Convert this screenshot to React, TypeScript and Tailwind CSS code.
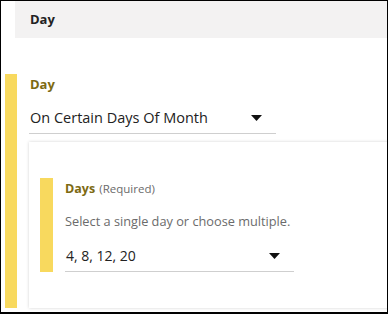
import React from "react";

const Caret: React.FC = () => (
  <svg width="11" height="6" viewBox="0 0 11 6" className="shrink-0">
    <path d="M0 0 H11 L5.5 6 Z" fill="#111" />
  </svg>
);

const SelectField: React.FC<{ value: string; width: string; size: string }> = ({ value, width, size }) => (
  <div className={`${width} flex items-center justify-between border-b border-[#cfcfcf] pb-[5px] pl-px pr-[14px]`}>
    <span className={`${size} leading-[20px] text-[#222]`}>{value}</span>
    <Caret />
  </div>
);

const App: React.FC = () => {
  return (
    <div
      className="w-[388px] h-[314px] overflow-hidden bg-white border border-black border-b-2"
      style={{ fontFamily: '"Open Sans", "Noto Sans", sans-serif' }}
    >
      {/* Section header */}
      <div className="ml-[14px] h-[37px] bg-[#f3f2f2] pl-[15px] flex items-center">
        <span className="text-[13px] font-bold text-[#222]">Day</span>
      </div>

      <div className="mt-[36px] flex">
        <div className="ml-[4px] w-[12px] bg-[#f8d95e] shrink-0" />
        <div className="pl-[12px] flex-1">
          <div className="pl-px text-[13px] leading-[20px] font-bold text-[#7d6a12]">Day</div>
          <div className="mt-[14px]">
            <SelectField value="On Certain Days Of Month" width="w-[247px]" size="text-[14.5px]" />
          </div>

          {/* Nested card */}
          <div className="mt-[8px] w-[420px] bg-white shadow-[0_0_3px_rgba(0,0,0,0.18)] pt-[36px] pb-[36px] pl-[11px]">
            <div className="flex">
              <div className="w-[13px] bg-[#f8d95e] shrink-0" />
              <div className="pl-[12px]">
                <div className="leading-[18px]">
                  <span className="text-[12.5px] font-bold text-[#7d6a12]">Days</span>{" "}
                  <span className="text-[11.5px] text-[#6b6b6b]">(Required)</span>
                </div>
                <div className="mt-[14px] text-[12.75px] leading-[18px] text-[#6b6b6b]">
                  Select a single day or choose multiple.
                </div>
                <div className="mt-[16px]">
                  <SelectField value="4, 8, 12, 20" width="w-[229px]" size="text-[14px]" />
                </div>
              </div>
            </div>
          </div>
        </div>
      </div>
    </div>
  );
};

export default App;
